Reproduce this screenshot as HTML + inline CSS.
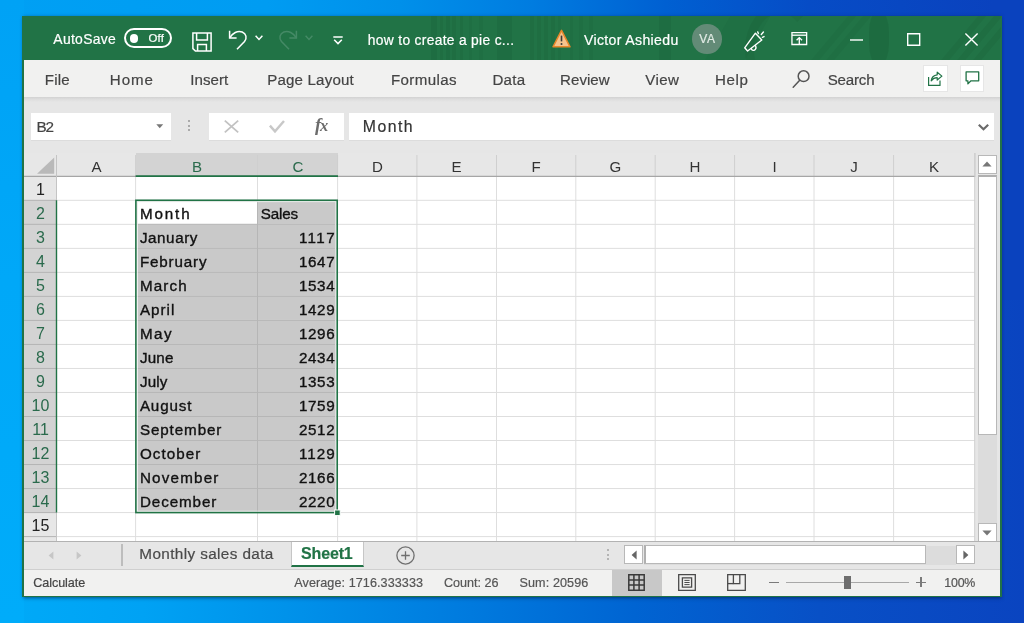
<!DOCTYPE html>
<html><head><meta charset="utf-8"><title>Excel</title>
<style>
*{box-sizing:border-box;margin:0;padding:0}
html,body{width:1024px;height:623px;overflow:hidden}
body{position:relative;font-family:"Liberation Sans",sans-serif;background:#0a44c0}
.a{position:absolute}
.t{position:absolute;white-space:pre;line-height:20px;height:20px;-webkit-text-stroke:0.2px currentColor}
#tx{position:absolute;left:0;top:0;width:1024px;height:623px;will-change:transform}
svg{position:absolute;overflow:visible}
</style></head><body>
<!-- desktop wallpaper strips -->
<div class="a" style="left:0;top:0;width:1024px;height:623px;background:linear-gradient(to right,#00a0f4 0%,#009cf2 26%,#0090ea 39%,#007ce0 52%,#0060d2 65%,#064cc6 79%,#0a42be 97%)"></div>
<div class="a" style="left:0;top:300px;width:1024px;height:323px;background:linear-gradient(to right,#00aaf8 0%,#00a2f4 14%,#0092ea 28%,#007ade 46%,#0064d2 62%,#0850c6 80%,#0a44c0 100%)"></div>
<div class="a" style="left:0;top:0;width:24px;height:623px;background:linear-gradient(to bottom,#00a2f5 0%,#00a8f8 45%,#00acfa 100%)"></div>
<!-- window shadow -->
<div class="a" style="left:23px;top:17px;width:978px;height:580px;box-shadow:0 0.5px 3.5px 0.5px rgba(0,25,60,.6);background:#217346"></div>
<!-- window -->
<div class="a" style="left:22.4px;top:16px;width:979.3px;height:581.4px;background:#217346"></div>
<!-- title bar decoration (subtle pattern) -->
<div class="a" style="left:23px;top:16px;width:978px;height:44px;overflow:hidden">
 <div class="a" style="left:408px;top:0;width:6px;height:44px;background:rgba(0,40,20,0.07)"></div>
 <div class="a" style="left:417px;top:0;width:3px;height:44px;background:rgba(0,40,20,0.06)"></div>
 <div class="a" style="left:423px;top:0;width:4px;height:44px;background:rgba(0,40,20,0.07)"></div>
 <div class="a" style="left:429px;top:0;width:4px;height:44px;background:rgba(0,40,20,0.06)"></div>
 <div class="a" style="left:437px;top:0;width:3px;height:44px;background:rgba(0,40,20,0.06)"></div>
 <div class="a" style="left:446px;top:0;width:3px;height:44px;background:rgba(0,40,20,0.05)"></div>
 <div class="a" style="left:456px;top:0;width:4px;height:44px;background:rgba(0,40,20,0.05)"></div>
 <div class="a" style="left:474px;top:0;width:15px;height:44px;background:rgba(0,40,20,0.08)"></div>
 <div class="a" style="left:507px;top:0;width:4px;height:44px;background:rgba(0,40,20,0.06)"></div>
 <div class="a" style="left:514px;top:0;width:4px;height:44px;background:rgba(0,40,20,0.06)"></div>
 <div class="a" style="left:521px;top:0;width:4px;height:44px;background:rgba(0,40,20,0.06)"></div>
 <div class="a" style="left:528px;top:0;width:4px;height:44px;background:rgba(0,40,20,0.06)"></div>
 <div class="a" style="left:535px;top:0;width:3px;height:44px;background:rgba(0,40,20,0.05)"></div>
 <div class="a" style="left:547px;top:0;width:3px;height:44px;background:rgba(0,40,20,0.05)"></div>
 <div class="a" style="left:556px;top:0;width:4px;height:44px;background:rgba(0,40,20,0.05)"></div>
 <div class="a" style="left:566px;top:0;width:4px;height:44px;background:rgba(0,40,20,0.05)"></div>
 <div class="a" style="left:636px;top:0;width:12px;height:44px;background:rgba(0,40,20,0.07)"></div>
 <div class="a" style="left:722px;top:-12px;width:70px;height:90px;border-radius:50%;border:9px solid rgba(0,40,20,.06);border-right-color:transparent;border-bottom-color:transparent"></div>
 <div class="a" style="left:846px;top:-4px;width:20px;height:52px;background:rgba(0,40,20,.10);border-radius:40%"></div>
 <div class="a" style="left:690px;top:-10px;width:40px;height:80px;background:rgba(0,40,20,.04);transform:skewX(-30deg)"></div>
 <div class="a" style="left:800px;top:-10px;width:8px;height:80px;background:rgba(0,40,20,.05);transform:skewX(-40deg)"></div>
 <div class="a" style="left:815px;top:-10px;width:8px;height:80px;background:rgba(0,40,20,.05);transform:skewX(-40deg)"></div>
 <div class="a" style="left:930px;top:-10px;width:8px;height:80px;background:rgba(0,40,20,.06);transform:skewX(-40deg)"></div>
 <div class="a" style="left:946px;top:-10px;width:8px;height:80px;background:rgba(0,40,20,.06);transform:skewX(-40deg)"></div>
 <div class="a" style="left:962px;top:-10px;width:8px;height:80px;background:rgba(0,40,20,.06);transform:skewX(-40deg)"></div>
</div>
<!-- autosave toggle -->
<div class="a" style="left:124px;top:28px;width:47.5px;height:20px;border:2px solid #fff;border-radius:10px"></div>
<div class="a" style="left:129.8px;top:34.2px;width:8.6px;height:8.6px;border-radius:50%;background:#fff"></div>
<!-- save icon -->
<svg style="left:192px;top:31.5px" width="20" height="20" viewBox="0 0 20 20" fill="none" stroke="#fff" stroke-width="1.5" stroke-linejoin="miter"><path d="M0.9 0.9 H19.1 V19.1 H3.4 L0.9 16.6 Z"/><path d="M4.6 0.9 V8 H15.4 V0.9"/><path d="M5.6 19.1 V12.6 H14.4 V19.1"/></svg>
<!-- undo -->
<svg style="left:227.8px;top:29px" width="20" height="21" viewBox="0 0 20 21" fill="none" stroke="#fff" stroke-width="1.5"><path d="M1.6 1.8 V9 H8.6"/><path d="M1.9 8.6 C4.5 4.2 9.5 1.2 14.2 3 C18.4 4.8 19.2 9 16.5 12.5 L9 20.2"/></svg>
<svg style="left:255.3px;top:35px" width="8" height="6" viewBox="0 0 8 6" fill="none" stroke="#fff" stroke-width="1.5"><path d="M0.6 0.8 L4 4.4 L7.4 0.8"/></svg>
<!-- redo (disabled) -->
<svg style="left:278px;top:29px" width="20" height="21" viewBox="0 0 20 21" fill="none" stroke="#458a66" stroke-width="1.5"><path d="M18.4 1.8 V9 H11.4"/><path d="M18.1 8.6 C15.5 4.2 10.5 1.2 5.8 3 C1.6 4.8 0.8 9 3.5 12.5 L11 20.2"/></svg>
<svg style="left:304.8px;top:35px" width="8" height="6" viewBox="0 0 8 6" fill="none" stroke="#458a66" stroke-width="1.4"><path d="M0.6 0.8 L4 4.4 L7.4 0.8"/></svg>
<!-- customize QAT -->
<svg style="left:332.5px;top:35.5px" width="10" height="9" viewBox="0 0 10 9" fill="none" stroke="#fff" stroke-width="1.5"><path d="M0.3 1 H9.7"/><path d="M1.2 3.8 L5 7.6 L8.8 3.8"/></svg>
<!-- warning -->
<svg style="left:552px;top:29px" width="19" height="19" viewBox="0 0 19 19"><path d="M9.5 1.4 L18 17.8 H1 Z" fill="#f6c38d" stroke="#e8872b" stroke-width="1.5" stroke-linejoin="round"/><path d="M9.5 6.6 V12.4" stroke="#3a3a3a" stroke-width="1.6"/><circle cx="9.5" cy="14.9" r="1" fill="#3a3a3a"/></svg>
<!-- avatar -->
<div class="a" style="left:692.3px;top:24.4px;width:29.4px;height:29.4px;border-radius:50%;background:#638b77"></div>
<!-- coming soon megaphone -->
<svg style="left:744px;top:31px" width="22" height="21" viewBox="0 0 22 21" fill="none" stroke="#fff" stroke-width="1.4" stroke-linejoin="round" stroke-linecap="round"><path d="M11.4 2.2 L17.8 9 L3.6 20 L0.7 16.8 Z"/><path d="M7.3 17.4 C7.5 19.7 10.3 20.1 11.5 18.2 C12.1 17.2 12.1 15.9 11.6 14.8"/><path d="M13.7 0.9 L14.4 2.5 M17.3 3.5 L19.4 1 M18.4 6.3 L20 5.6"/></svg>
<!-- ribbon display options -->
<svg style="left:790.7px;top:32.3px" width="16.6" height="13.2" viewBox="0 0 17 14" fill="none" stroke="#fff" stroke-width="1.4"><path d="M0.7 0.7 H16.3 V13.3 H0.7 Z"/><path d="M0.7 3.4 H16.3"/><path d="M8.5 13.3 V6.2 M5.6 8.8 L8.5 5.9 L11.4 8.8"/></svg>
<!-- window controls -->
<svg style="left:850px;top:38.6px" width="13" height="2" viewBox="0 0 13 2"><path d="M0 1 H13" stroke="#fff" stroke-width="1.4"/></svg>
<svg style="left:907.3px;top:32.8px" width="13.4" height="13" viewBox="0 0 13.4 13" fill="none" stroke="#fff" stroke-width="1.4"><path d="M0.7 0.7 H12.7 V12.3 H0.7 Z"/></svg>
<svg style="left:965px;top:32.6px" width="13" height="13" viewBox="0 0 13 13" fill="none" stroke="#fff" stroke-width="1.4"><path d="M0.4 0.4 L12.6 12.6 M12.6 0.4 L0.4 12.6"/></svg>

<!-- ribbon -->
<div class="a" style="left:24px;top:60px;width:976px;height:37px;background:#f1f1f0"></div>
<div class="a" style="left:24px;top:97px;width:976px;height:56px;background:#e6e6e6"></div>
<div class="a" style="left:24px;top:97px;width:976px;height:5px;background:linear-gradient(to bottom,#d2d2d2,#dedede 50%,#e6e6e6)"></div>
<!-- search icon -->
<svg style="left:792px;top:69px" width="20" height="20" viewBox="0 0 20 20" fill="none" stroke="#555" stroke-width="1.5"><circle cx="11.6" cy="7.2" r="5.4"/><path d="M7.7 11.2 L1.2 18.2" stroke-linecap="round"/></svg>
<!-- share / comment buttons -->
<div class="a" style="left:922.7px;top:64.6px;width:25.1px;height:27.7px;background:#fff;border:1px solid #e6e6e6"></div>
<div class="a" style="left:959.6px;top:64.6px;width:24.2px;height:27.7px;background:#fff;border:1px solid #e6e6e6"></div>
<svg style="left:927px;top:71px" width="16" height="16" viewBox="0 0 16 16" fill="none" stroke="#217346" stroke-width="1.2" stroke-linejoin="round"><path d="M1.6 6 V14.4 H13 V9.6"/><path d="M4.2 9.8 C4.5 6.5 7 4.2 10.2 3.8 V1.2 L14.9 5.1 L10.2 9 V6.7 C7.8 6.7 5.8 7.6 4.2 9.8 Z"/></svg>
<svg style="left:964.6px;top:71.4px" width="15" height="14" viewBox="0 0 15 14" fill="none" stroke="#217346" stroke-width="1.3" stroke-linejoin="round"><path d="M1.1 0.9 H13.7 V9.8 H6 L2.9 12.9 V9.8 H1.1 Z"/></svg>
<!-- formula bar -->
<div class="a" style="left:30.8px;top:112.6px;width:140.2px;height:28.2px;background:#fff;border-bottom:1px solid #dcdcdc"></div>
<svg style="left:156px;top:124px" width="8" height="5" viewBox="0 0 8 5"><path d="M0.3 0.3 H7.2 L3.75 4.2 Z" fill="#777"/></svg>
<div class="a" style="left:188px;top:120px;width:2px;height:2px;background:#aaa"></div>
<div class="a" style="left:188px;top:124.5px;width:2px;height:2px;background:#aaa"></div>
<div class="a" style="left:188px;top:129px;width:2px;height:2px;background:#aaa"></div>
<div class="a" style="left:209px;top:112.6px;width:134.6px;height:28.2px;background:#fff;border-bottom:1px solid #dcdcdc"></div>
<svg style="left:224px;top:119.5px" width="15" height="13" viewBox="0 0 15 13" fill="none" stroke="#c2c2c2" stroke-width="1.8"><path d="M0.8 0.6 L14.2 12.4 M14.2 0.6 L0.8 12.4"/></svg>
<svg style="left:269px;top:120px" width="16" height="13" viewBox="0 0 16 13" fill="none" stroke="#c8c8c8" stroke-width="2.4"><path d="M0.9 5.6 L6 11.4 L15 1"/></svg>
<span class="a" style="left:314.6px;top:113.6px;font-family:'Liberation Serif',serif;font-style:italic;font-weight:bold;font-size:18.5px;line-height:22px;color:#6c6c6c;letter-spacing:-1.2px;will-change:transform">f<span style="font-size:16.5px">x</span></span>
<div class="a" style="left:348.8px;top:112.6px;width:644.8px;height:28.2px;background:#fff;border-bottom:1px solid #dcdcdc"></div>
<svg style="left:978px;top:124px" width="11" height="7" viewBox="0 0 11 7" fill="none" stroke="#6a6a6a" stroke-width="2.2"><path d="M0.8 0.8 L5.5 5.3 L10.2 0.8"/></svg>

<!-- grid -->
<div class="a" style="left:24px;top:153px;width:952px;height:388px;background:#fff"></div>
<div class="a" style="left:24px;top:153px;width:952px;height:23.5px;background:#e7e7e7"></div>
<div class="a" style="left:24px;top:176.5px;width:32.5px;height:364.5px;background:#e7e7e7"></div>
<div class="a" style="left:135.6px;top:153px;width:202.0px;height:23px;background:#d3d3d3"></div>
<div class="a" style="left:24px;top:200.32px;width:32px;height:312.26px;background:#d3d3d3"></div>
<div class="a" style="left:137.8px;top:224.34px;width:197.8px;height:286.64px;background:#c9c9c9"></div>
<div class="a" style="left:257.5px;top:201.92px;width:78.1px;height:24.02px;background:#c9c9c9"></div>
<svg style="left:0;top:0" width="1024" height="623" viewBox="0 0 1024 623" fill="none">
<path d="M56.5 155 V176" stroke="#cfcfcf" stroke-width="1"/>
<path d="M135.6 155 V176" stroke="#cfcfcf" stroke-width="1"/>
<path d="M257.5 155 V176" stroke="#cfcfcf" stroke-width="1"/>
<path d="M337.6 155 V176" stroke="#cfcfcf" stroke-width="1"/>
<path d="M416.9 155 V176" stroke="#cfcfcf" stroke-width="1"/>
<path d="M496.5 155 V176" stroke="#cfcfcf" stroke-width="1"/>
<path d="M575.8 155 V176" stroke="#cfcfcf" stroke-width="1"/>
<path d="M655.2 155 V176" stroke="#cfcfcf" stroke-width="1"/>
<path d="M734.6 155 V176" stroke="#cfcfcf" stroke-width="1"/>
<path d="M814 155 V176" stroke="#cfcfcf" stroke-width="1"/>
<path d="M893.6 155 V176" stroke="#cfcfcf" stroke-width="1"/>
<path d="M135.6 177 V541" stroke="#dedede" stroke-width="1"/>
<path d="M257.5 177 V541" stroke="#dedede" stroke-width="1"/>
<path d="M337.6 177 V541" stroke="#dedede" stroke-width="1"/>
<path d="M416.9 177 V541" stroke="#dedede" stroke-width="1"/>
<path d="M496.5 177 V541" stroke="#dedede" stroke-width="1"/>
<path d="M575.8 177 V541" stroke="#dedede" stroke-width="1"/>
<path d="M655.2 177 V541" stroke="#dedede" stroke-width="1"/>
<path d="M734.6 177 V541" stroke="#dedede" stroke-width="1"/>
<path d="M814 177 V541" stroke="#dedede" stroke-width="1"/>
<path d="M893.6 177 V541" stroke="#dedede" stroke-width="1"/>
<path d="M57 200.32 H974.5" stroke="#dedede" stroke-width="1"/>
<path d="M24 200.32 H56" stroke="#b4b4b4" stroke-width="1"/>
<path d="M57 224.34 H974.5" stroke="#dedede" stroke-width="1"/>
<path d="M24 224.34 H56" stroke="#b4b4b4" stroke-width="1"/>
<path d="M57 248.36 H974.5" stroke="#dedede" stroke-width="1"/>
<path d="M24 248.36 H56" stroke="#b4b4b4" stroke-width="1"/>
<path d="M57 272.38 H974.5" stroke="#dedede" stroke-width="1"/>
<path d="M24 272.38 H56" stroke="#b4b4b4" stroke-width="1"/>
<path d="M57 296.40 H974.5" stroke="#dedede" stroke-width="1"/>
<path d="M24 296.40 H56" stroke="#b4b4b4" stroke-width="1"/>
<path d="M57 320.42 H974.5" stroke="#dedede" stroke-width="1"/>
<path d="M24 320.42 H56" stroke="#b4b4b4" stroke-width="1"/>
<path d="M57 344.44 H974.5" stroke="#dedede" stroke-width="1"/>
<path d="M24 344.44 H56" stroke="#b4b4b4" stroke-width="1"/>
<path d="M57 368.46 H974.5" stroke="#dedede" stroke-width="1"/>
<path d="M24 368.46 H56" stroke="#b4b4b4" stroke-width="1"/>
<path d="M57 392.48 H974.5" stroke="#dedede" stroke-width="1"/>
<path d="M24 392.48 H56" stroke="#b4b4b4" stroke-width="1"/>
<path d="M57 416.50 H974.5" stroke="#dedede" stroke-width="1"/>
<path d="M24 416.50 H56" stroke="#b4b4b4" stroke-width="1"/>
<path d="M57 440.52 H974.5" stroke="#dedede" stroke-width="1"/>
<path d="M24 440.52 H56" stroke="#b4b4b4" stroke-width="1"/>
<path d="M57 464.54 H974.5" stroke="#dedede" stroke-width="1"/>
<path d="M24 464.54 H56" stroke="#b4b4b4" stroke-width="1"/>
<path d="M57 488.56 H974.5" stroke="#dedede" stroke-width="1"/>
<path d="M24 488.56 H56" stroke="#b4b4b4" stroke-width="1"/>
<path d="M57 512.58 H974.5" stroke="#dedede" stroke-width="1"/>
<path d="M24 512.58 H56" stroke="#b4b4b4" stroke-width="1"/>
<path d="M57 536.60 H974.5" stroke="#dedede" stroke-width="1"/>
<path d="M24 536.60 H56" stroke="#b4b4b4" stroke-width="1"/>
<path d="M138 224.34 H335.4" stroke="#b6b6b6" stroke-width="1"/>
<path d="M138 248.36 H335.4" stroke="#b6b6b6" stroke-width="1"/>
<path d="M138 272.38 H335.4" stroke="#b6b6b6" stroke-width="1"/>
<path d="M138 296.40 H335.4" stroke="#b6b6b6" stroke-width="1"/>
<path d="M138 320.42 H335.4" stroke="#b6b6b6" stroke-width="1"/>
<path d="M138 344.44 H335.4" stroke="#b6b6b6" stroke-width="1"/>
<path d="M138 368.46 H335.4" stroke="#b6b6b6" stroke-width="1"/>
<path d="M138 392.48 H335.4" stroke="#b6b6b6" stroke-width="1"/>
<path d="M138 416.50 H335.4" stroke="#b6b6b6" stroke-width="1"/>
<path d="M138 440.52 H335.4" stroke="#b6b6b6" stroke-width="1"/>
<path d="M138 464.54 H335.4" stroke="#b6b6b6" stroke-width="1"/>
<path d="M138 488.56 H335.4" stroke="#b6b6b6" stroke-width="1"/>
<path d="M257.5 201.92 V510.98" stroke="#b6b6b6" stroke-width="1"/>
<path d="M24 176.4 H975" stroke="#a6a6a6" stroke-width="1.2"/>
<path d="M56.5 155 V541" stroke="#c4c4c4" stroke-width="1"/>
<path d="M974.9 153 V541" stroke="#c6c6c6" stroke-width="1.2"/>
<path d="M135.6 176.2 H338" stroke="#217346" stroke-width="1.8"/>
<path d="M56.5 200.32 V512.58" stroke="#217346" stroke-width="1.4"/>
<rect x="137.3" y="201.62" width="198.5" height="309.61" stroke="#ececec" stroke-width="1"/>
<rect x="135.9" y="200.27" width="201.3" height="312.31" stroke="#217346" stroke-width="1.6"/>
<rect x="334.6" y="509.98" width="5.6" height="5.6" fill="#217346" stroke="#fff" stroke-width="1"/>
<path d="M54.2 157.4 V173.8 H37 Z" fill="#b9b9b9"/>
</svg>
<div class="a" style="left:976px;top:153px;width:24px;height:388px;background:#e6e6e6"></div>
<div class="a" style="left:977.5px;top:175px;width:19px;height:348px;background:#dcdcdc"></div>
<div class="a" style="left:977.5px;top:154.5px;width:19px;height:19px;background:#fff;border:1px solid #b8b8b8"></div>
<svg style="left:982px;top:161px" width="10" height="6" viewBox="0 0 10 6"><path d="M0.4 5.6 L5 0.6 L9.6 5.6 Z" fill="#777"/></svg>
<div class="a" style="left:977.5px;top:175px;width:19px;height:259.5px;background:#fff;border:1px solid #b8b8b8;border-top:2px solid #b0b0b0"></div>
<div class="a" style="left:977.5px;top:522.5px;width:19px;height:19px;background:#fff;border:1px solid #b8b8b8"></div>
<svg style="left:982px;top:529.5px" width="10" height="6" viewBox="0 0 10 6"><path d="M0.4 0.4 L5 5.4 L9.6 0.4 Z" fill="#777"/></svg>
<!-- sheet tab bar -->
<div class="a" style="left:24px;top:541px;width:976px;height:29px;background:#e6e6e6"></div>
<div class="a" style="left:24px;top:540.6px;width:976px;height:1.2px;background:#b2b2b2"></div>
<div class="a" style="left:24px;top:568.6px;width:976px;height:1.4px;background:#cfcfcf"></div>
<svg style="left:47.6px;top:550.6px" width="6" height="9" viewBox="0 0 6 9"><path d="M5.4 0.6 V8.4 L0.6 4.5 Z" fill="#c6c6c6"/></svg>
<svg style="left:76.4px;top:550.6px" width="6" height="9" viewBox="0 0 6 9"><path d="M0.6 0.6 V8.4 L5.4 4.5 Z" fill="#c6c6c6"/></svg>
<div class="a" style="left:121.4px;top:544.2px;width:1.5px;height:21.4px;background:#bdbdbd"></div>
<!-- active tab -->
<div class="a" style="left:291px;top:541.6px;width:72.6px;height:25.1px;background:#fff;border-left:1px solid #c6c6c6;border-right:1px solid #c6c6c6;border-bottom:2.2px solid #217346"></div>
<svg style="left:395.9px;top:545.9px" width="19" height="19" viewBox="0 0 19 19" fill="none" stroke="#6e6e6e" stroke-width="1.3"><circle cx="9.5" cy="9.5" r="8.6"/><path d="M9.5 5.2 V13.8 M5.2 9.5 H13.8"/></svg>
<!-- hscroll -->
<div class="a" style="left:607px;top:549px;width:2px;height:2px;background:#b4b4b4"></div>
<div class="a" style="left:607px;top:553.7px;width:2px;height:2px;background:#b4b4b4"></div>
<div class="a" style="left:607px;top:558.4px;width:2px;height:2px;background:#b4b4b4"></div>
<div class="a" style="left:644px;top:545.5px;width:312px;height:19px;background:#dcdcdc"></div>
<div class="a" style="left:624px;top:545.3px;width:19px;height:19.2px;background:#fff;border:1px solid #b8b8b8"></div>
<svg style="left:630.5px;top:549.8px" width="6" height="10" viewBox="0 0 6 10"><path d="M5.6 0.4 V9.6 L0.6 5 Z" fill="#666"/></svg>
<div class="a" style="left:644.4px;top:545.3px;width:281.4px;height:19.2px;background:#fff;border:1px solid #b8b8b8;border-left:2px solid #b0b0b0"></div>
<div class="a" style="left:956px;top:545.3px;width:19.4px;height:19.2px;background:#fff;border:1px solid #b8b8b8"></div>
<svg style="left:963px;top:549.8px" width="6" height="10" viewBox="0 0 6 10"><path d="M0.4 0.4 V9.6 L5.4 5 Z" fill="#666"/></svg>

<!-- status bar -->
<div class="a" style="left:24px;top:570px;width:976px;height:26px;background:#f1f1f0"></div>
<div class="a" style="left:612px;top:570px;width:49.5px;height:26px;background:#c8c8c8"></div>
<!-- normal view -->
<svg style="left:627.6px;top:573.6px" width="17" height="17" viewBox="0 0 17 17" fill="none" stroke="#3a3a3a" stroke-width="1.5"><path d="M0.8 0.8 H16.2 V16.2 H0.8 Z"/><path d="M5.9 0.8 V16.2 M11.1 0.8 V16.2 M0.8 5.9 H16.2 M0.8 11.1 H16.2"/></svg>
<!-- page layout -->
<svg style="left:677.6px;top:573.6px" width="18" height="17" viewBox="0 0 18 17" fill="none" stroke="#4a4a4a" stroke-width="1.3"><path d="M0.7 0.7 H17.3 V16.3 H0.7 Z"/><path d="M4.4 3.8 H13.6 V13.2 H4.4 Z"/><path d="M6.4 6.4 H11.6 M6.4 8.5 H11.6 M6.4 10.6 H11.6" stroke-width="1"/></svg>
<!-- page break -->
<svg style="left:726.6px;top:573.6px" width="19" height="17" viewBox="0 0 19 17" fill="none" stroke="#4a4a4a" stroke-width="1.3"><path d="M0.7 0.7 H18.3 V16.3 H0.7 Z"/><path d="M6.4 0.7 V9.6 H12.8 V0.7"/><path d="M0.7 9.6 H6.4"/></svg>
<!-- zoom slider -->
<div class="a" style="left:769px;top:581.6px;width:10px;height:1.3px;background:#7a7a7a"></div>
<div class="a" style="left:786px;top:581.6px;width:123px;height:1.2px;background:#a8a8a8"></div>
<div class="a" style="left:844.2px;top:576px;width:6.4px;height:13.4px;background:#6e6e6e"></div>
<div class="a" style="left:916px;top:581.6px;width:10px;height:1.3px;background:#7a7a7a"></div>
<div class="a" style="left:920.4px;top:577.2px;width:1.3px;height:10px;background:#7a7a7a"></div>

<div id="tx">
<span class="t" style="left:53.30px;top:28.98px;font-size:13.9px;color:#fff;letter-spacing:0.321px;">AutoSave</span>
<span class="t" style="left:148.50px;top:28.45px;font-size:11.4px;color:#fff;letter-spacing:0.208px;">Off</span>
<span class="t" style="left:367.80px;top:30.92px;font-size:13.8px;color:#fff;letter-spacing:0.321px;">how to create a pie c...</span>
<span class="t" style="left:584.00px;top:29.91px;font-size:14.1px;color:#fff;letter-spacing:0.343px;">Victor Ashiedu</span>
<span class="t" style="left:699.20px;top:29.24px;font-size:12px;color:#e2ebe5;letter-spacing:0.675px;">VA</span>
<span class="t" style="left:44.80px;top:69.77px;font-size:15.1px;color:#444;letter-spacing:0.191px;">File</span>
<span class="t" style="left:109.80px;top:69.77px;font-size:15.1px;color:#444;letter-spacing:0.978px;">Home</span>
<span class="t" style="left:190.20px;top:69.77px;font-size:15.1px;color:#444;letter-spacing:0.070px;">Insert</span>
<span class="t" style="left:267.20px;top:69.77px;font-size:15.1px;color:#444;letter-spacing:0.183px;">Page Layout</span>
<span class="t" style="left:391.00px;top:69.77px;font-size:15.1px;color:#444;letter-spacing:0.371px;">Formulas</span>
<span class="t" style="left:492.40px;top:69.77px;font-size:15.1px;color:#444;letter-spacing:0.270px;">Data</span>
<span class="t" style="left:560.10px;top:69.77px;font-size:15.1px;color:#444;">Review</span>
<span class="t" style="left:645.20px;top:69.77px;font-size:15.1px;color:#444;letter-spacing:0.449px;">View</span>
<span class="t" style="left:715.10px;top:69.77px;font-size:15.1px;color:#444;letter-spacing:0.618px;">Help</span>
<span class="t" style="left:827.70px;top:69.77px;font-size:15.1px;color:#444;letter-spacing:-0.186px;">Search</span>
<span class="t" style="left:36.60px;top:117.10px;font-size:15.3px;color:#444;letter-spacing:-1.319px;">B2</span>
<span class="t" style="left:362.80px;top:116.73px;font-size:15.8px;color:#333;letter-spacing:1.473px;">Month</span>
<span class="t" style="left:91.46px;top:156.87px;font-size:15.1px;color:#333;-webkit-text-stroke:0;">A</span>
<span class="t" style="left:191.96px;top:156.87px;font-size:15.1px;color:#2a6a4c;-webkit-text-stroke:0;">B</span>
<span class="t" style="left:292.55px;top:156.87px;font-size:15.1px;color:#2a6a4c;-webkit-text-stroke:0;">C</span>
<span class="t" style="left:372.05px;top:156.87px;font-size:15.1px;color:#333;-webkit-text-stroke:0;">D</span>
<span class="t" style="left:451.46px;top:156.87px;font-size:15.1px;color:#333;-webkit-text-stroke:0;">E</span>
<span class="t" style="left:531.38px;top:156.87px;font-size:15.1px;color:#333;-webkit-text-stroke:0;">F</span>
<span class="t" style="left:609.62px;top:156.87px;font-size:15.1px;color:#333;-webkit-text-stroke:0;">G</span>
<span class="t" style="left:689.55px;top:156.87px;font-size:15.1px;color:#333;-webkit-text-stroke:0;">H</span>
<span class="t" style="left:772.40px;top:156.87px;font-size:15.1px;color:#333;-webkit-text-stroke:0;">I</span>
<span class="t" style="left:850.23px;top:156.87px;font-size:15.1px;color:#333;-webkit-text-stroke:0;">J</span>
<span class="t" style="left:928.96px;top:156.87px;font-size:15.1px;color:#333;-webkit-text-stroke:0;">K</span>
<span class="t" style="left:36.05px;top:179.58px;font-size:16px;color:#222;-webkit-text-stroke:0;">1</span>
<span class="t" style="left:36.05px;top:203.60px;font-size:16px;color:#2a6a4c;-webkit-text-stroke:0;">2</span>
<span class="t" style="left:36.05px;top:227.62px;font-size:16px;color:#2a6a4c;-webkit-text-stroke:0;">3</span>
<span class="t" style="left:36.05px;top:251.64px;font-size:16px;color:#2a6a4c;-webkit-text-stroke:0;">4</span>
<span class="t" style="left:36.05px;top:275.66px;font-size:16px;color:#2a6a4c;-webkit-text-stroke:0;">5</span>
<span class="t" style="left:36.05px;top:299.68px;font-size:16px;color:#2a6a4c;-webkit-text-stroke:0;">6</span>
<span class="t" style="left:36.05px;top:323.70px;font-size:16px;color:#2a6a4c;-webkit-text-stroke:0;">7</span>
<span class="t" style="left:36.05px;top:347.72px;font-size:16px;color:#2a6a4c;-webkit-text-stroke:0;">8</span>
<span class="t" style="left:36.05px;top:371.74px;font-size:16px;color:#2a6a4c;-webkit-text-stroke:0;">9</span>
<span class="t" style="left:31.60px;top:395.76px;font-size:16px;color:#2a6a4c;-webkit-text-stroke:0;">10</span>
<span class="t" style="left:32.20px;top:419.78px;font-size:16px;color:#2a6a4c;-webkit-text-stroke:0;">11</span>
<span class="t" style="left:31.60px;top:443.80px;font-size:16px;color:#2a6a4c;-webkit-text-stroke:0;">12</span>
<span class="t" style="left:31.60px;top:467.82px;font-size:16px;color:#2a6a4c;-webkit-text-stroke:0;">13</span>
<span class="t" style="left:31.60px;top:491.84px;font-size:16px;color:#2a6a4c;-webkit-text-stroke:0;">14</span>
<span class="t" style="left:31.60px;top:515.86px;font-size:16px;color:#222;-webkit-text-stroke:0;">15</span>
<span class="t" style="left:139.90px;top:203.57px;font-size:15.2px;color:#111;letter-spacing:1.895px;-webkit-text-stroke:0.35px #111;">Month</span>
<span class="t" style="left:260.80px;top:203.57px;font-size:15.2px;color:#111;letter-spacing:-0.200px;-webkit-text-stroke:0.35px #111;">Sales</span>
<span class="t" style="left:139.90px;top:227.59px;font-size:15.2px;color:#111;letter-spacing:0.576px;-webkit-text-stroke:0.35px #111;">January</span>
<span class="t" style="left:298.90px;top:227.59px;font-size:15.2px;color:#111;letter-spacing:1.390px;-webkit-text-stroke:0.35px #111;">1117</span>
<span class="t" style="left:139.90px;top:251.61px;font-size:15.2px;color:#111;letter-spacing:0.846px;-webkit-text-stroke:0.35px #111;">February</span>
<span class="t" style="left:298.90px;top:251.61px;font-size:15.2px;color:#111;letter-spacing:0.634px;-webkit-text-stroke:0.35px #111;">1647</span>
<span class="t" style="left:139.90px;top:275.63px;font-size:15.2px;color:#111;letter-spacing:1.124px;-webkit-text-stroke:0.35px #111;">March</span>
<span class="t" style="left:298.90px;top:275.63px;font-size:15.2px;color:#111;letter-spacing:0.634px;-webkit-text-stroke:0.35px #111;">1534</span>
<span class="t" style="left:139.90px;top:299.65px;font-size:15.2px;color:#111;letter-spacing:1.002px;-webkit-text-stroke:0.35px #111;">April</span>
<span class="t" style="left:298.90px;top:299.65px;font-size:15.2px;color:#111;letter-spacing:0.634px;-webkit-text-stroke:0.35px #111;">1429</span>
<span class="t" style="left:139.90px;top:323.67px;font-size:15.2px;color:#111;letter-spacing:1.548px;-webkit-text-stroke:0.35px #111;">May</span>
<span class="t" style="left:298.90px;top:323.67px;font-size:15.2px;color:#111;letter-spacing:0.634px;-webkit-text-stroke:0.35px #111;">1296</span>
<span class="t" style="left:139.90px;top:347.69px;font-size:15.2px;color:#111;letter-spacing:0.188px;-webkit-text-stroke:0.35px #111;">June</span>
<span class="t" style="left:298.90px;top:347.69px;font-size:15.2px;color:#111;letter-spacing:0.634px;-webkit-text-stroke:0.35px #111;">2434</span>
<span class="t" style="left:139.90px;top:371.71px;font-size:15.2px;color:#111;letter-spacing:0.161px;-webkit-text-stroke:0.35px #111;">July</span>
<span class="t" style="left:298.90px;top:371.71px;font-size:15.2px;color:#111;letter-spacing:0.634px;-webkit-text-stroke:0.35px #111;">1353</span>
<span class="t" style="left:139.90px;top:395.73px;font-size:15.2px;color:#111;letter-spacing:0.841px;-webkit-text-stroke:0.35px #111;">August</span>
<span class="t" style="left:298.90px;top:395.73px;font-size:15.2px;color:#111;letter-spacing:0.634px;-webkit-text-stroke:0.35px #111;">1759</span>
<span class="t" style="left:139.90px;top:419.75px;font-size:15.2px;color:#111;letter-spacing:0.900px;-webkit-text-stroke:0.35px #111;">September</span>
<span class="t" style="left:298.90px;top:419.75px;font-size:15.2px;color:#111;letter-spacing:0.634px;-webkit-text-stroke:0.35px #111;">2512</span>
<span class="t" style="left:139.90px;top:443.77px;font-size:15.2px;color:#111;letter-spacing:1.078px;-webkit-text-stroke:0.35px #111;">October</span>
<span class="t" style="left:298.90px;top:443.77px;font-size:15.2px;color:#111;letter-spacing:1.009px;-webkit-text-stroke:0.35px #111;">1129</span>
<span class="t" style="left:139.90px;top:467.79px;font-size:15.2px;color:#111;letter-spacing:1.205px;-webkit-text-stroke:0.35px #111;">November</span>
<span class="t" style="left:298.90px;top:467.79px;font-size:15.2px;color:#111;letter-spacing:0.634px;-webkit-text-stroke:0.35px #111;">2166</span>
<span class="t" style="left:139.90px;top:491.81px;font-size:15.2px;color:#111;letter-spacing:0.920px;-webkit-text-stroke:0.35px #111;">December</span>
<span class="t" style="left:298.90px;top:491.81px;font-size:15.2px;color:#111;letter-spacing:0.634px;-webkit-text-stroke:0.35px #111;">2220</span>
<span class="t" style="left:139.30px;top:543.90px;font-size:15.3px;color:#4a4a4a;letter-spacing:0.380px;">Monthly sales data</span>
<span class="t" style="left:301.10px;top:543.86px;font-size:16px;color:#217346;letter-spacing:-0.174px;font-weight:bold;">Sheet1</span>
<span class="t" style="left:33.20px;top:573.23px;font-size:12.6px;color:#444;letter-spacing:-0.064px;">Calculate</span>
<span class="t" style="left:294.30px;top:573.23px;font-size:12.6px;color:#555;letter-spacing:0.078px;">Average: 1716.333333</span>
<span class="t" style="left:444.00px;top:573.23px;font-size:12.6px;color:#555;">Count: 26</span>
<span class="t" style="left:519.50px;top:573.23px;font-size:12.6px;color:#555;letter-spacing:0.098px;">Sum: 20596</span>
<span class="t" style="left:944.30px;top:573.30px;font-size:12.4px;color:#555;letter-spacing:-0.201px;">100%</span>
</div>
</body></html>
